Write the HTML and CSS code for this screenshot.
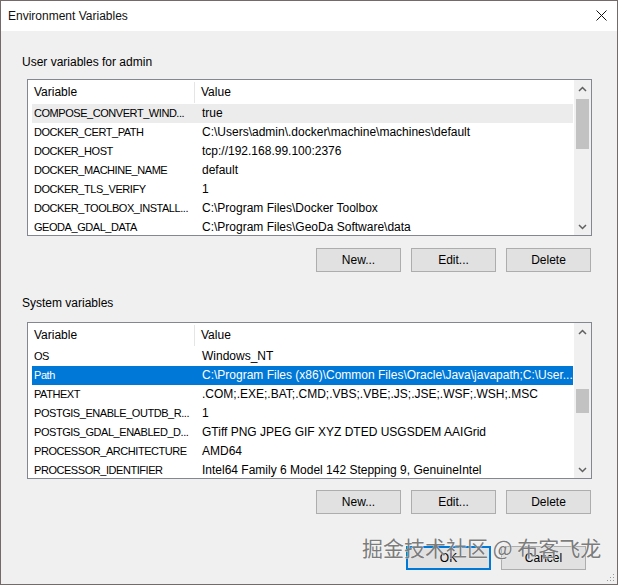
FILE: index.html
```html
<!DOCTYPE html>
<html lang="en">
<head>
  <meta charset="UTF-8" />
  <title>Environment Variables</title>
  <link rel="stylesheet" href="styles.css">
</head>
<body>
  <div class="window">
    <div class="titlebar">
      <span class="title">Environment Variables</span>
      <span class="close">
        <svg width="11" height="11" viewBox="0 0 11 11"><path d="M0.5 0.5 L10.5 10.5 M10.5 0.5 L0.5 10.5" stroke="#111" stroke-width="1" fill="none"/></svg>
      </span>
    </div>

    <div class="content">
      <div class="group-label">User variables for admin</div>
      <div class="listbox user-list">
        <div class="list-main">
          <div class="list-head">
            <div class="col-var">Variable</div>
            <div class="col-val">Value</div>
          </div>
          <div class="list-body">
            <div class="row selected-gray"><div class="col-var">COMPOSE_CONVERT_WIND...</div><div class="col-val">true</div></div>
            <div class="row"><div class="col-var">DOCKER_CERT_PATH</div><div class="col-val">C:\Users\admin\.docker\machine\machines\default</div></div>
            <div class="row"><div class="col-var">DOCKER_HOST</div><div class="col-val">tcp://192.168.99.100:2376</div></div>
            <div class="row"><div class="col-var">DOCKER_MACHINE_NAME</div><div class="col-val">default</div></div>
            <div class="row"><div class="col-var">DOCKER_TLS_VERIFY</div><div class="col-val">1</div></div>
            <div class="row"><div class="col-var">DOCKER_TOOLBOX_INSTALL...</div><div class="col-val">C:\Program Files\Docker Toolbox</div></div>
            <div class="row"><div class="col-var">GEODA_GDAL_DATA</div><div class="col-val">C:\Program Files\GeoDa Software\data</div></div>
          </div>
        </div>
        <div class="scrollbar">
          <div class="arrow up"><svg width="9" height="6" viewBox="0 0 9 6"><path d="M1 5 L4.5 1.5 L8 5" stroke="#606060" stroke-width="1.5" fill="none"/></svg></div>
          <div class="track"><div class="thumb thumb-top"></div></div>
          <div class="arrow down"><svg width="9" height="6" viewBox="0 0 9 6"><path d="M1 1 L4.5 4.5 L8 1" stroke="#606060" stroke-width="1.5" fill="none"/></svg></div>
        </div>
      </div>
      <div class="buttons">
        <button class="btn">New...</button>
        <button class="btn">Edit...</button>
        <button class="btn">Delete</button>
      </div>

      <div class="group-label">System variables</div>
      <div class="listbox sys-list">
        <div class="list-main">
          <div class="list-head">
            <div class="col-var">Variable</div>
            <div class="col-val">Value</div>
          </div>
          <div class="list-body">
            <div class="row"><div class="col-var">OS</div><div class="col-val">Windows_NT</div></div>
            <div class="row selected"><div class="col-var">Path</div><div class="col-val">C:\Program Files (x86)\Common Files\Oracle\Java\javapath;C:\User...</div></div>
            <div class="row"><div class="col-var">PATHEXT</div><div class="col-val">.COM;.EXE;.BAT;.CMD;.VBS;.VBE;.JS;.JSE;.WSF;.WSH;.MSC</div></div>
            <div class="row"><div class="col-var">POSTGIS_ENABLE_OUTDB_R...</div><div class="col-val">1</div></div>
            <div class="row"><div class="col-var">POSTGIS_GDAL_ENABLED_D...</div><div class="col-val">GTiff PNG JPEG GIF XYZ DTED USGSDEM AAIGrid</div></div>
            <div class="row"><div class="col-var">PROCESSOR_ARCHITECTURE</div><div class="col-val">AMD64</div></div>
            <div class="row"><div class="col-var">PROCESSOR_IDENTIFIER</div><div class="col-val">Intel64 Family 6 Model 142 Stepping 9, GenuineIntel</div></div>
          </div>
        </div>
        <div class="scrollbar">
          <div class="arrow up"><svg width="9" height="6" viewBox="0 0 9 6"><path d="M1 5 L4.5 1.5 L8 5" stroke="#606060" stroke-width="1.5" fill="none"/></svg></div>
          <div class="track"><div class="thumb thumb-sys"></div></div>
          <div class="arrow down"><svg width="9" height="6" viewBox="0 0 9 6"><path d="M1 1 L4.5 4.5 L8 1" stroke="#606060" stroke-width="1.5" fill="none"/></svg></div>
        </div>
      </div>
      <div class="buttons sys-buttons">
        <button class="btn">New...</button>
        <button class="btn">Edit...</button>
        <button class="btn">Delete</button>
      </div>

      <div class="buttons dialog-buttons">
        <button class="btn btn-default">OK</button>
        <button class="btn">Cancel</button>
      </div>
    </div>

    <!-- marca d'agua por cima dos botoes -->
    <div class="watermark">掘金技术社区 @ 布客飞龙</div>
    <div class="grip"></div>
  </div>
</body>
</html>
```

FILE: styles.css
```css
* {
  margin: 0;
  padding: 0;
  box-sizing: border-box;
}

body {
  font-family: "Liberation Sans", Arial, sans-serif;
  font-size: 12px;
  color: #000;
  background: #f0f0f0;
}

.window {
  position: relative;
  width: 618px;
  height: 585px;
  border: 1px solid #76696a;
  background-color: #f0f0f0;
  overflow: hidden;
}

.titlebar {
  display: flex;
  justify-content: space-between;
  align-items: center;
  height: 30px;
  background-color: #fff;
  padding: 0 10px 0 7px;
}

.title {
  font-size: 12px;
  color: #111;
}

.close {
  display: flex;
  margin-top: -1px;
}

.content {
  padding: 0 25px 0 26px;
}

.group-label {
  margin: 23px 0 0 -5px;
  height: 16px;
  line-height: 16px;
}

/* listas */
.listbox {
  display: flex;
  height: 157px;
  margin-top: 9px;
  border: 1px solid #828790;
  background-color: #fff;
}

.sys-list {
  margin-top: 11px;
}

.list-main {
  flex: 1;
  min-width: 0;
  overflow: hidden;
}

.list-head {
  display: grid;
  grid-template-columns: 167px 1fr;
  height: 24px;
  align-items: center;
}

.list-head .col-var {
  padding-left: 6px;
  border-right: 1px solid #e5e5e5;
  height: 21px;
  line-height: 21px;
}

.list-head .col-val {
  padding-left: 6px;
}

.list-body {
  height: 131px;
  overflow: hidden;
}

.row {
  display: grid;
  grid-template-columns: 163px 1fr;
  height: 19px;
  line-height: 19px;
  margin: 0 1px 0 4px;
  white-space: nowrap;
}

.col-var,
.col-val {
  overflow: hidden;
  white-space: nowrap;
}

.row .col-var {
  padding-left: 2px;
  font-size: 11px;
  letter-spacing: -0.45px;
}

.row .col-val {
  padding-left: 7px;
}

.selected-gray {
  background-color: #ececec;
}

.selected {
  background-color: #0078d7;
  color: #fff;
}

/* barra de rolagem */
.scrollbar {
  display: flex;
  flex-direction: column;
  width: 17px;
  background-color: #f0f0f0;
}

.arrow {
  height: 17px;
  display: flex;
  align-items: center;
  justify-content: center;
}

.track {
  flex: 1;
  position: relative;
}

.thumb {
  position: absolute;
  left: 2px;
  right: 2px;
  background-color: #c2c2c2;
}

.thumb-top {
  top: 2px;
  height: 50px;
}

.thumb-sys {
  top: 49px;
  height: 24px;
}

/* botoes */
.buttons {
  display: flex;
  justify-content: flex-end;
  gap: 10px;
  margin-top: 12px;
  padding-right: 1px;
}

.sys-buttons {
  margin-top: 11px;
}

.btn {
  width: 85px;
  height: 24px;
  font-family: "Liberation Sans", Arial, sans-serif;
  font-size: 12px;
  color: #000;
  background-color: #e1e1e1;
  border: 1px solid #adadad;
}

.dialog-buttons {
  margin-top: 32px;
  padding-right: 6px;
}

.btn-default {
  border: 2px solid #0078d7;
}

.watermark {
  position: absolute;
  left: 361px;
  top: 531px;
  font-family: "Noto Sans CJK SC", sans-serif;
  font-size: 21px;
  color: #7c7c7c;
  -webkit-text-stroke: 0.6px #fff;
  paint-order: stroke fill;
  white-space: nowrap;
}

.grip {
  position: absolute;
  right: 3px;
  bottom: 3px;
  width: 8px;
  height: 8px;
  background-image: radial-gradient(circle, #999 0.8px, transparent 1px);
  background-size: 3px 3px;
  clip-path: polygon(100% 0, 100% 100%, 0 100%);
}
```
